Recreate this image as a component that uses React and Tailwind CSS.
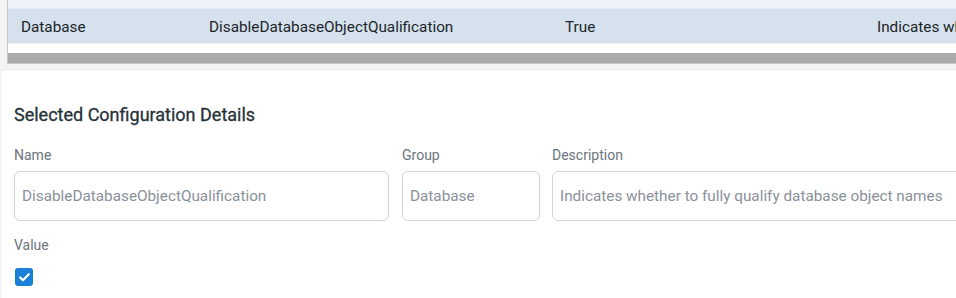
import { Check } from 'lucide-react';

const rowCell = 'shrink-0 whitespace-nowrap';

const Field = ({ label, value, className }) => (
  <div className={className}>
    <p className="text-[14px] leading-[18px] text-[#6c757d]">{label}</p>
    <div className="mt-[7px] h-[50px] border border-[#cfd4d9] rounded-[6px] px-[7px] flex items-center bg-white">
      <span className="text-[15.3px] text-[#8a9199] whitespace-nowrap">{value}</span>
    </div>
  </div>
);

export default function App() {
  return (
    <div className="h-[298px] w-[956px] overflow-hidden bg-[#f4f4f4]" style={{ fontFamily: 'Roboto, "Liberation Sans", sans-serif' }}>
      {/* grid (scrolled) */}
      <div className="ml-[7px] bg-white border-l border-b border-[#c6c6c6] overflow-hidden">
        <div className="h-[9px] bg-[#edf2f9] border-b border-[#e3e9f0]"></div>
        <div className="h-[34px] bg-[#d5e2ee] flex items-center pt-[2px] text-[15.3px] text-[#212529]">
          <span className={`${rowCell} w-[201px] pl-[13px]`}>Database</span>
          <span className={`${rowCell} w-[356px]`}>DisableDatabaseObjectQualification</span>
          <span className={`${rowCell} w-[312px]`}>True</span>
          <span className={rowCell}>Indicates whether to fully qualify database object names</span>
        </div>
        <div className="h-[10px] bg-white border-t border-[#eef1f4]"></div>
        <div className="h-[10px] bg-[#ababab]"></div>
      </div>

      {/* details */}
      <div className="mt-[5px] ml-[2px] bg-white border-t border-[#e8e8e8] h-[240px] pl-[12px] pt-[33px]">
        <h2 className="text-[18px] leading-[24px] text-[#263238]" style={{ WebkitTextStroke: '0.3px #263238' }}>Selected Configuration Details</h2>
        <div className="mt-[19px] flex">
          <Field label="Name" value="DisableDatabaseObjectQualification" className="w-[375px] shrink-0" />
          <Field label="Group" value="Database" className="ml-[13px] w-[138px] shrink-0" />
          <Field label="Description" value="Indicates whether to fully qualify database object names" className="ml-[12px] w-[420px] shrink-0" />
        </div>
        <p className="mt-[15px] text-[14px] leading-[18px] text-[#6c757d]">Value</p>
        <div className="mt-[14px] ml-px w-[18px] h-[18px] rounded-[3px] bg-[#1a7fd6] flex items-center justify-center">
          <Check className="w-[13px] h-[13px] text-white" strokeWidth={4} />
        </div>
      </div>
    </div>
  );
}
